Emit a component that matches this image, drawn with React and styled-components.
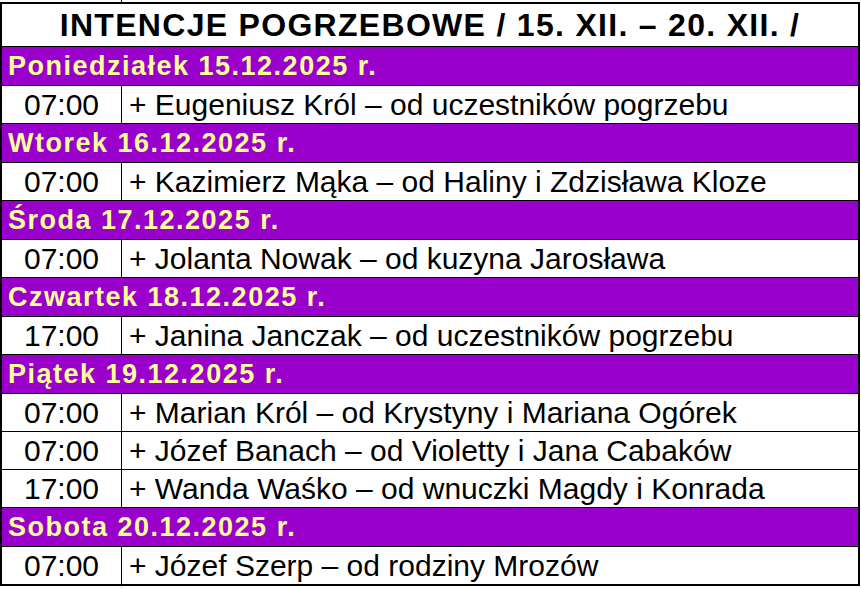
import React from "react";
import styled, { createGlobalStyle } from "styled-components";

const GlobalStyle = createGlobalStyle`
  html, body {
    margin: 0;
    padding: 0;
    background: #ffffff;
  }
  body {
    font-family: "Liberation Sans", Arial, sans-serif;
  }
`;

const days = [
  {
    label: "Poniedziałek 15.12.2025 r.",
    items: [["07:00", "+ Eugeniusz Król – od uczestników pogrzebu"]],
  },
  {
    label: "Wtorek 16.12.2025 r.",
    items: [["07:00", "+ Kazimierz Mąka – od Haliny i Zdzisława Kloze"]],
  },
  {
    label: "Środa 17.12.2025 r.",
    items: [["07:00", "+ Jolanta Nowak – od kuzyna Jarosława"]],
  },
  {
    label: "Czwartek 18.12.2025 r.",
    items: [["17:00", "+ Janina Janczak – od uczestników pogrzebu"]],
  },
  {
    label: "Piątek 19.12.2025 r.",
    items: [
      ["07:00", "+ Marian Król – od Krystyny i Mariana Ogórek"],
      ["07:00", "+ Józef Banach – od Violetty i Jana Cabaków"],
      ["17:00", "+ Wanda Waśko – od wnuczki Magdy i Konrada"],
    ],
  },
  {
    label: "Sobota 20.12.2025 r.",
    items: [["07:00", "+ Józef Szerp – od rodziny Mrozów"]],
  },
];

export default function App() {
  return (
    <>
      <GlobalStyle />
      <Sheet>
        <Stub>
          <StubCell />
          <div />
        </Stub>
        <Table>
          <Title>INTENCJE POGRZEBOWE / 15. XII. – 20. XII. /</Title>
          {days.map((day) => (
            <React.Fragment key={day.label}>
              <DayHeader>{day.label}</DayHeader>
              {day.items.map(([time, text], i) => (
                <Row key={i}>
                  <Time>{time}</Time>
                  <Text>{text}</Text>
                </Row>
              ))}
            </React.Fragment>
          ))}
        </Table>
        <Stub>
          <StubCell $faint />
          <div />
        </Stub>
      </Sheet>
    </>
  );
}

const Sheet = styled.div`
  width: 860px;
`;

const Stub = styled.div`
  display: grid;
  grid-template-columns: 122px 1fr;
  height: 2px;
`;

const StubCell = styled.div`
  border-right: 1px solid ${(p) => (p.$faint ? "#d0d0d0" : "#000")};
`;

const Table = styled.div`
  border: 2px solid #000;
  display: flex;
  flex-direction: column;
`;

const Title = styled.div`
  height: 42px;
  border-bottom: 1px solid #000;
  display: flex;
  align-items: center;
  justify-content: center;
  font-weight: bold;
  font-size: 32px;
  letter-spacing: 1.3px;
  color: #000;
  white-space: nowrap;
`;

const DayHeader = styled.div`
  height: 38px;
  border-bottom: 1px solid #000;
  background: #9900cc;
  color: #ffff99;
  font-weight: bold;
  font-size: 27px;
  letter-spacing: 1.5px;
  display: flex;
  align-items: center;
  padding-left: 6px;
  white-space: nowrap;
  &:last-child {
    border-bottom: none;
  }
`;

const Row = styled.div`
  display: grid;
  grid-template-columns: 120px 1fr;
  height: 37px;
  border-bottom: 1px solid #000;
  font-size: 30px;
  color: #000;
  &:last-child {
    border-bottom: none;
  }
`;

const Time = styled.div`
  border-right: 1px solid #000;
  display: flex;
  align-items: center;
  justify-content: center;
`;

const Text = styled.div`
  display: flex;
  align-items: center;
  padding-left: 7px;
  white-space: nowrap;
`;
